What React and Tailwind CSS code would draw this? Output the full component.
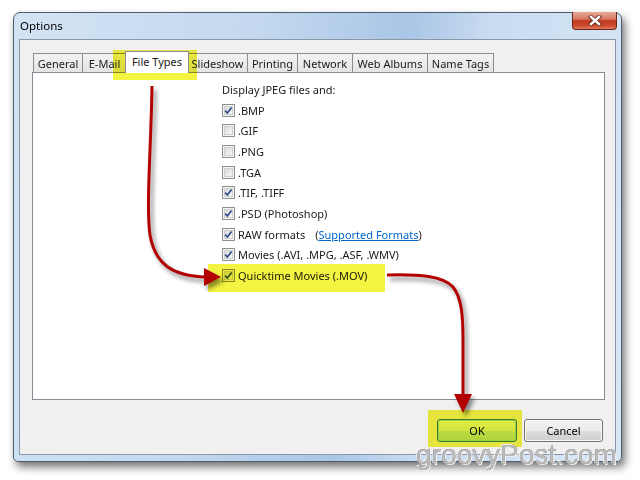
import React from "react";

// 파일 형식 체크 목록
const fileTypes = [
  { label: ".BMP", checked: true },
  { label: ".GIF", checked: false },
  { label: ".PNG", checked: false },
  { label: ".TGA", checked: false },
  { label: ".TIF, .TIFF", checked: true },
  { label: ".PSD (Photoshop)", checked: true },
  { label: "RAW formats", checked: true, link: "Supported Formats" },
  { label: "Movies (.AVI, .MPG, .ASF, .WMV)", checked: true },
  { label: "Quicktime Movies (.MOV)", checked: true },
];

const tabs = [
  { name: "General", w: "w-[50px]" },
  { name: "E-Mail", w: "w-[45px]" },
  { name: "File Types", w: "w-[64px]", active: true },
  { name: "Slideshow", w: "w-[61px]" },
  { name: "Printing", w: "w-[51px]" },
  { name: "Network", w: "w-[56px]" },
  { name: "Web Albums", w: "w-[76px]" },
  { name: "Name Tags", w: "w-[67px]" },
];

function CheckBox({ checked }) {
  return (
    <span className="w-[13px] h-[13px] border border-[#8e8f8f] bg-[#f4f4f4] p-px flex shrink-0">
      <span className="flex-1 relative border border-[#cfcfcf] bg-[linear-gradient(135deg,#dadada,#f7f7f7)]">
        {checked && (
          <svg className="absolute -left-[2px] -top-[2px]" width="11" height="11" viewBox="0 0 11 11">
            <path d="M2.2 5.6 L4.4 8 L8.6 2.6" fill="none" stroke="#2f4a8c" strokeWidth="1.7" />
          </svg>
        )}
      </span>
    </span>
  );
}

function Tab({ tab, first }) {
  if (tab.active) {
    return (
      <div
        className={`${tab.w} h-[22px] -ml-[2px] -mr-px -mb-px relative z-10 bg-white border border-b-0 border-[#898c95] flex items-center justify-center pb-[2px]`}
      >
        {tab.name}
      </div>
    );
  }
  return (
    <div
      className={`${tab.w} h-[19px] ${first ? "" : "-ml-px"} border border-b-0 border-[#898c95] bg-[linear-gradient(#f3f3f3,#e4e4e4)] flex items-center justify-center`}
    >
      {tab.name}
    </div>
  );
}

export default function App() {
  return (
    <div className="relative w-[640px] h-[480px] bg-white overflow-hidden font-['Noto_Sans','Open_Sans',sans-serif] text-[11px] text-[#1a1a1a] leading-none">
      {/* 창 프레임 */}
      <div className="ml-[13px] mt-[12px] w-[609px] h-[450px] rounded-t-[7px] rounded-b-[5px] border border-[#4d5c6e] bg-[linear-gradient(100deg,#d3e3f4_0%,#c4d9ef_35%,#aac6e6_58%,#c9dcf1_70%,#dae8f7_100%)] shadow-[3px_5px_9px_rgba(0,0,0,0.55)] flex flex-col">
        {/* 타이틀바 */}
        <div className="h-[26px] flex justify-between shrink-0">
          <div className="pl-[6px] pt-[7px] text-[11.5px] text-black">Options</div>
          <div className="mr-[4px] -mt-px w-[45px] h-[18px] rounded-b-[4px] border border-t-0 border-[#6b2618] bg-[linear-gradient(#eaa898,#d77b66_40%,#c23b20_52%,#cb4a30_80%,#e07d63)] flex items-center justify-center">
            <svg width="14" height="11" viewBox="0 0 14 11">
              <path d="M3 2 L11 9 M11 2 L3 9" stroke="#6a2a1c" strokeWidth="4.2" strokeLinecap="square" />
              <path d="M3 2 L11 9 M11 2 L3 9" stroke="#ffffff" strokeWidth="2.4" strokeLinecap="square" />
            </svg>
          </div>
        </div>

        {/* 클라이언트 영역 */}
        <div className="mx-[5px] h-[416px] border border-[#8a97a6] bg-[#f0f0f0] flex flex-col">
          {/* 탭 */}
          <div className="mt-[11px] pl-[13px] flex items-end">
            {tabs.map((t, i) => (
              <Tab key={t.name} tab={t} first={i === 0} />
            ))}
          </div>

          {/* 탭 패널 */}
          <div className="ml-[12px] w-[573px] h-[328px] bg-white border border-[#898c95] pl-[189px] pt-[6px] flex flex-col">
            <div className="h-[20.7px] flex items-center">Display JPEG files and:</div>
            {fileTypes.map((f) => (
              <div key={f.label} className="h-[20.7px] flex items-center gap-[3px]">
                <CheckBox checked={f.checked} />
                <span>{f.label}</span>
                {f.link && (
                  <span className="ml-[7px]">
                    (<span className="text-[#0066cc] underline">{f.link}</span>)
                  </span>
                )}
              </div>
            ))}
          </div>

          {/* 버튼 */}
          <div className="mt-[19px] pr-[12px] flex justify-end gap-[7px]">
            <button className="w-[80px] h-[23px] rounded-[3px] border border-[#3c7fb1] bg-[linear-gradient(#eef8fe,#dcf0fd_50%,#c4e6fc_50%,#b7ddf8)] shadow-[inset_0_0_0_1px_#9ee0f8] text-black">
              OK
            </button>
            <button className="w-[79px] h-[23px] rounded-[3px] border border-[#707070] bg-[linear-gradient(#f2f2f2,#ebebeb_50%,#dddddd_50%,#cfcfcf)] shadow-[inset_0_0_0_1px_#fcfcfc] text-black">
              Cancel
            </button>
          </div>
        </div>
      </div>

      {/* 노란 강조 */}
      <div className="absolute left-[113px] top-[50px] w-[84px] h-[30px] bg-[#f3f341] mix-blend-multiply" />
      <div className="absolute left-[208px] top-[264px] w-[177px] h-[28px] bg-[#f3f341] mix-blend-multiply" />
      <div className="absolute left-[428px] top-[410px] w-[94px] h-[37px] bg-[#f3f341] mix-blend-multiply" />

      {/* 빨간 화살표 */}
      <svg className="absolute left-0 top-0 pointer-events-none" width="640" height="480" viewBox="0 0 640 480">
        <g className="[filter:drop-shadow(3px_4px_2px_rgba(0,0,0,0.45))]">
          <path d="M152 86 C151 150 146 205 150 235 C155 264 172 276 206 277" fill="none" stroke="#b30000" strokeWidth="3" />
          <polygon points="204,268 221,277 204,286" fill="#b30000" />
          <path d="M387 275 C420 274 443 276 453 287 C462 298 463 318 463 340 L463 396" fill="none" stroke="#b30000" strokeWidth="3" />
          <polygon points="454,394 472,394 463,413" fill="#b30000" />
        </g>
      </svg>

      {/* 워터마크 */}
      <div className="absolute left-[416px] top-[441px] font-['Liberation_Sans',sans-serif] text-[28px] leading-none text-[#bdbdbd] [text-shadow:0_0_1px_#444,1px_1px_0_#fff,-1px_-1px_0_#fff]">
        groovyPost.com
      </div>
    </div>
  );
}
